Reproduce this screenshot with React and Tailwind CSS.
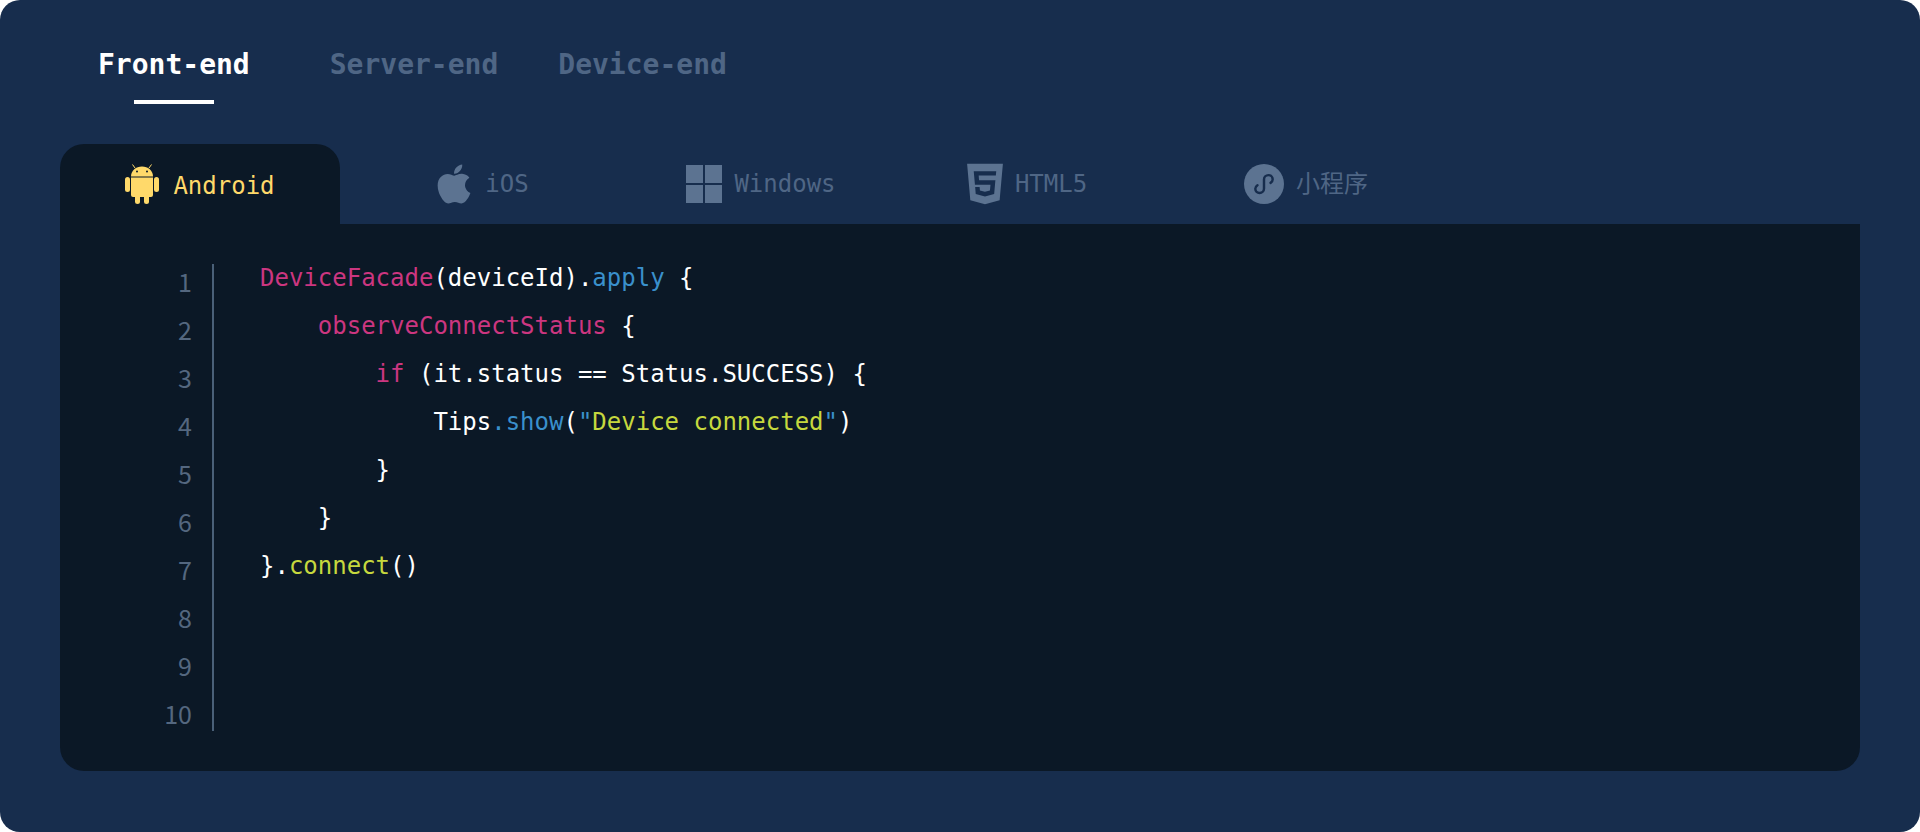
import { AiFillApple, AiFillHtml5 } from "react-icons/ai";

const mainTabs = [
  { label: "Front-end", active: true, className: "mr-[80px]" },
  { label: "Server-end", className: "mr-[60px]" },
  { label: "Device-end" },
];

function AndroidIcon({ className }) {
  return (
    <svg viewBox="0 0 34 40" className={className} fill="currentColor">
      <path d="M10 4 7.5 0.5M24 4l2.5-3.5" stroke="currentColor" strokeWidth="1" fill="none" />
      <path d="M6 12.5C6 6.5 11 2.5 17 2.5s11 4 11 10z" />
      <circle cx="12" cy="7.5" r="1" fill="#0b1826" />
      <circle cx="22" cy="7.5" r="1" fill="#0b1826" />
      <rect x="0" y="13" width="5" height="15" rx="2.5" />
      <rect x="29" y="13" width="5" height="15" rx="2.5" />
      <path d="M6 13.5h22V31a2 2 0 0 1-2 2H8a2 2 0 0 1-2-2z" />
      <rect x="10" y="30" width="5" height="10" rx="2.5" />
      <rect x="19" y="30" width="5" height="10" rx="2.5" />
    </svg>
  );
}

function WindowsIcon({ className }) {
  return (
    <svg viewBox="0 0 36 40" className={className} fill="currentColor">
      <rect x="0" y="1" width="17" height="18" />
      <rect x="19" y="1" width="17" height="18" />
      <rect x="0" y="21" width="17" height="18" />
      <rect x="19" y="21" width="17" height="18" />
    </svg>
  );
}

function MiniProgramIcon({ className }) {
  return (
    <svg viewBox="0 0 40 40" className={className}>
      <circle cx="20" cy="20" r="20" fill="currentColor" />
      <path
        d="M12 21.5c-1.6 1-2.6 2.6-2.6 4.4 0 3 2.5 5 5.2 5 3 0 5.4-2.4 5.4-5.4V14.6c0-3 2.4-5.4 5.4-5.4 2.8 0 5.2 2.1 5.2 5 0 1.8-1 3.4-2.6 4.4"
        transform="translate(20 20) scale(0.82) translate(-20 -20)"
        fill="none"
        stroke="#172d4d"
        strokeWidth="3"
        strokeLinecap="round"
      />
    </svg>
  );
}

const platforms = [
  { label: "Android", Icon: AndroidIcon, width: "w-[280px] gap-3.5", iconClass: "h-10 w-[34px]", active: true },
  { label: "iOS", Icon: AiFillApple, width: "w-[284px] gap-3.5 pl-[2px]", iconClass: "-mx-[7px] -my-1 h-12 w-12" },
  { label: "Windows", Icon: WindowsIcon, width: "w-[272px] gap-3 pl-[2px]", iconClass: "h-10 w-9" },
  { label: "HTML5", Icon: AiFillHtml5, width: "w-[260px] gap-3 pl-[2px]", iconClass: "-mx-[7px] -my-[5px] h-[50px] w-[50px]" },
  { label: "小程序", Icon: MiniProgramIcon, width: "w-[298px] gap-3 pl-[2px]", iconClass: "h-10 w-10" },
];

const pink = "text-[#cc3680]";
const blue = "text-[#3a90cc]";
const lime = "text-[#c6d83e]";

const codeLines = [
  [[pink, "DeviceFacade"], ["", "(deviceId)."], [blue, "apply"], ["", " {"]],
  [[pink, "    observeConnectStatus"], ["", " {"]],
  [[pink, "        if"], ["", " (it.status == Status.SUCCESS) {"]],
  [["", "            Tips"], [blue, ".show"], ["", "("], [blue, '"'], [lime, "Device connected"], [blue, '"'], ["", ")"]],
  [["", "        }"]],
  [["", "    }"]],
  [["", "}."], [lime, "connect"], ["", "()"]],
];

const lineNumbers = [1, 2, 3, 4, 5, 6, 7, 8, 9, 10];

export default function App() {
  return (
    <div className="h-[832px] w-[1920px] overflow-hidden bg-white font-['DejaVu_Sans_Mono','Noto_Sans_CJK_SC',monospace]">
      <div className="flex h-full flex-col rounded-[20px] bg-[#172d4d] px-[60px] pb-[61px]">
        <nav className="flex h-[144px] items-start pl-[38px] pt-12 text-[28px] font-bold leading-[34px]">
          {mainTabs.map((tab) => (
            <div key={tab.label} className={`relative ${tab.className || ""} ${tab.active ? "text-white" : "text-[#4f6685]"}`}>
              {tab.label}
              {tab.active && <span className="absolute left-[36px] top-[52px] h-1 w-20 bg-white" />}
            </div>
          ))}
        </nav>

        <div className="flex h-[80px] items-stretch">
          {platforms.map(({ label, Icon, width, iconClass, active }) => (
            <div
              key={label}
              className={`flex ${width} items-start justify-center pt-5 text-2xl leading-10 ${
                active ? "rounded-t-3xl bg-[#0b1826] text-[#ffd96a]" : "text-[#4f6685]"
              }`}
            >
              <Icon className={`${iconClass} shrink-0 ${active ? "" : "text-[#5c7391]"}`} />
              <span className={active ? "pt-[2px]" : ""}>{label}</span>
            </div>
          ))}
        </div>

        <div className="flex min-h-0 flex-1 rounded-b-3xl bg-[#0b1826]">
          <div className="ml-[60px] mt-10 h-[467px] w-[94px] border-r-2 border-[#4a6078] pr-5 text-right font-['Noto_Sans_CJK_SC',sans-serif] text-[25px] leading-12 text-[#54677f]">
            <div className="-mt-[7px]">
              {lineNumbers.map((n) => (
                <div key={n}>{n}</div>
              ))}
            </div>
          </div>
          <div className="ml-[46px] mt-[30px] whitespace-pre text-2xl leading-12 text-white">
            {codeLines.map((parts, i) => (
              <div key={i}>
                {parts.map(([color, text], j) => (
                  <span key={j} className={color}>
                    {text}
                  </span>
                ))}
              </div>
            ))}
          </div>
        </div>
      </div>
    </div>
  );
}
